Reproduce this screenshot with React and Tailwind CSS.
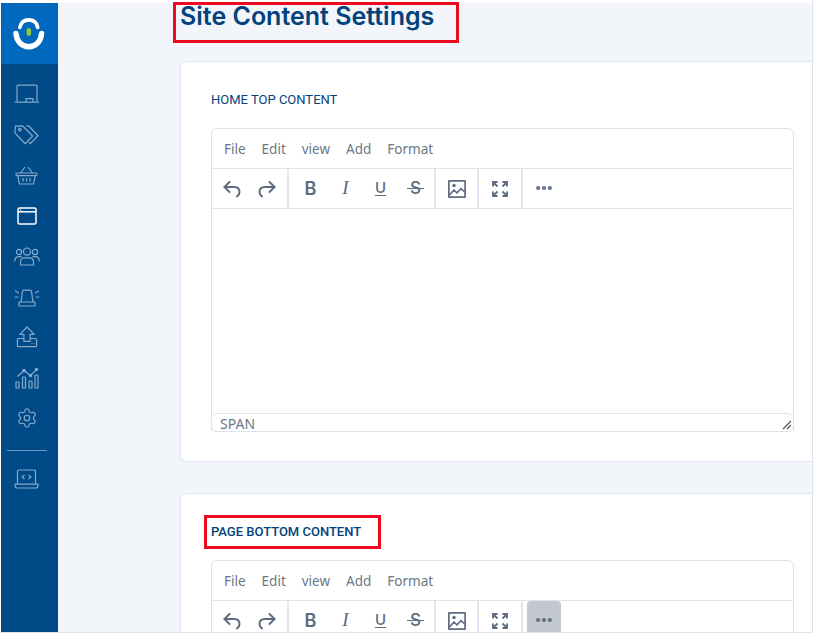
import { Ellipsis, Settings } from "lucide-react";

const navColor = "#86a8c9";

function BoardIcon() {
  return (
    <svg width="26" height="20" viewBox="0 0 26 20" fill="none" stroke="currentColor" strokeWidth="1.2">
      <path d="M3 17.500V2.200q0-1 1-1h18q1 0 1 1v15.300" />
      <path d="M.8 18.200h24.400" />
      <path d="M12 18v-3.400h7V18" />
    </svg>
  );
}

function TagsIcon() {
  return (
    <svg width="25" height="22" viewBox="0 0 26 23" fill="none" stroke="currentColor" strokeWidth="1.300" strokeLinejoin="round">
      <path d="M1.200 2.200 1 8.600q0 .8.600 1.400l10 10.600 7.800-8-10-10.200q-.6-.5-1.300-.5z" />
      <circle cx="6" cy="6" r="1.300" />
      <path d="M13 1.900h1.500q.7 0 1.200.5l9.300 9.900-8 8.200-1.800-1.800" />
    </svg>
  );
}

function BasketIcon() {
  return (
    <svg width="23" height="19" viewBox="0 0 23 19" fill="none" stroke="currentColor" strokeWidth="1.200" strokeLinejoin="round">
      <path d="M5.500 7 10 1M17.500 7 13 1" />
      <rect x="1" y="7" width="21" height="2.600" rx="1" />
      <path d="m2.800 9.600 1.600 8.400h14.200l1.600-8.400" />
      <path d="M8 12v3.500M11.500 12v3.500M15 12v3.500" />
    </svg>
  );
}

function WindowIcon() {
  return (
    <svg width="20" height="18" viewBox="0 0 20 18" fill="none" stroke="currentColor" strokeWidth="1.500">
      <rect x="1" y="1" width="18" height="16" rx="1.500" />
      <path d="M1 4.800h18" />
      <path d="M3.200 2.900h1" />
    </svg>
  );
}

function PeopleIcon() {
  return (
    <svg width="26" height="19" viewBox="0 0 26 19" fill="none" stroke="currentColor" strokeWidth="1.200" strokeLinecap="round">
      <circle cx="13" cy="4.600" r="3.600" />
      <circle cx="5" cy="5" r="2.600" />
      <circle cx="21" cy="5" r="2.600" />
      <path d="M6.500 18v-3q0-4.200 4-4.200h5q4 0 4 4.200v3z" />
      <path d="M.8 14q0-4.400 4-4.400h2.400M25.200 14q0-4.400-4-4.400h-2.400" />
    </svg>
  );
}

function SirenIcon() {
  return (
    <svg width="26" height="20" viewBox="0 0 26 20" fill="none" stroke="currentColor" strokeWidth="1.200" strokeLinecap="round">
      <path d="M7 15 8.500 4.500q.2-1.300 1.500-1.300h6q1.300 0 1.500 1.300L19 15" />
      <rect x="5" y="15" width="16" height="4" rx=".6" />
      <path d="M1.500 4 4.500 6M1 10h3M24.500 4 21.500 6M25 10h-3" />
    </svg>
  );
}

function UploadIcon() {
  return (
    <svg width="22" height="22" viewBox="0 0 22 22" fill="none" stroke="currentColor" strokeWidth="1.200" strokeLinejoin="round">
      <path d="M11 1 3.800 8.400h4.100v7h6.200v-7h4.100z" />
      <path d="M7.900 12.500H2.600q-1.200 0-1.200 1.200v6q0 1 1 1h17.200q1 0 1-1v-6q0-1.200-1.200-1.200h-5.300" />
      <path d="M15.500 17.500h1M18 17.500h.6" />
    </svg>
  );
}

function ChartIcon() {
  return (
    <svg width="24" height="22" viewBox="0 0 24 22" fill="none" stroke="currentColor" strokeWidth="1.200">
      <rect x="1" y="15" width="3" height="6" rx=".6" />
      <rect x="7.500" y="10" width="3" height="11" rx=".6" />
      <rect x="14" y="14" width="3" height="7" rx=".6" />
      <rect x="20" y="8" width="3" height="13" rx=".6" />
      <path d="m2.500 9.500 6.500-6 6.500 5 6-6" />
      <circle cx="9" cy="3.500" r="1.200" fill="currentColor" />
      <circle cx="15.500" cy="8.500" r="1.200" fill="currentColor" />
      <circle cx="21.500" cy="2.500" r="1.200" fill="currentColor" />
    </svg>
  );
}

function GearIcon() {
  return <Settings size={22} strokeWidth={1.300} />;
}

function LaptopCodeIcon() {
  return (
    <svg width="25" height="20" viewBox="0 0 25 20" fill="none" stroke="currentColor" strokeWidth="1.200" strokeLinejoin="round">
      <path d="M3.500 14.500V2.200q0-1.200 1.200-1.200h15.600q1.200 0 1.200 1.200v12.300" />
      <path d="M1 15.200h23v1.600q0 2.200-2.200 2.200H3.200Q1 19 1 16.800z" />
      <path d="M10.500 6 8 8l2.500 2M14.500 6 17 8l-2.500 2" />
    </svg>
  );
}

function Logo() {
  return (
    <svg width="32" height="32" viewBox="0 0 32 32" fill="none" strokeLinecap="round">
      <path d="M6.800 9.500C8 4 11.800 1.900 15.800 1.900s7.800 2.100 9 7.600" stroke="#fff" strokeWidth="3.600" />
      <path d="M3 15.500C3.600 23.500 9 28.700 15.800 28.700s12.200-5.200 12.800-13.200" stroke="#fff" strokeWidth="5.400" />
      <ellipse cx="15.800" cy="14" rx="2.400" ry="4" fill="#8dc63f" />
    </svg>
  );
}

function UndoIcon() {
  return (
    <svg width="18" height="18" viewBox="0 0 18 18" fill="none" stroke="currentColor" strokeWidth="2" strokeLinecap="round" strokeLinejoin="round">
      <path d="M6.500 2 1.500 7l5 5" />
      <path d="M1.500 7h9.500q5.500 0 5.500 5 0 2.500-2.500 4.500" />
    </svg>
  );
}

function RedoIcon() {
  return (
    <svg width="18" height="18" viewBox="0 0 18 18" fill="none" stroke="currentColor" strokeWidth="2" strokeLinecap="round" strokeLinejoin="round">
      <path d="m11.500 2 5 5-5 5" />
      <path d="M16.500 7H7q-5.500 0-5.500 5 0 2.500 2.500 4.500" />
    </svg>
  );
}

function PictureIcon() {
  return (
    <svg width="18" height="18" viewBox="0 0 18 18" fill="none" stroke="currentColor" strokeWidth="1.700" strokeLinejoin="round">
      <rect x=".9" y=".9" width="16.200" height="16.200" />
      <circle cx="6" cy="5.500" r="1.700" fill="currentColor" stroke="none" />
      <path d="m1 15.500 5-5.500 3 3 4-4.500 4.200 4" />
    </svg>
  );
}

function FullscreenIcon() {
  return (
    <svg width="16" height="16" viewBox="0 0 16 16" fill="none" stroke="currentColor" strokeWidth="1.800">
      <path d="M1 5.500V1h4.500M1 1l4.500 4.500M15 5.500V1h-4.500M15 1l-4.500 4.500M1 10.500V15h4.500M1 15l4.500-4.500M15 10.500V15h-4.500M15 15l-4.500-4.500" />
    </svg>
  );
}

function Tool({ children }) {
  return <span className="flex h-full w-[35px] items-center justify-center">{children}</span>;
}

function Editor({ moreActive, children }) {
  return (
    <div className="rounded-md border border-[#d9e3ee] bg-white">
      <div className="flex h-[39px] items-center gap-[16px] pt-[2px] pl-[12px] text-[13.500px] text-[#6b7785]">
        <span>File</span>
        <span>Edit</span>
        <span>view</span>
        <span>Add</span>
        <span>Format</span>
      </div>
      <div className="flex h-[41px] items-stretch border-y border-[#dfe5ec] text-[#5c6b80]">
        <div className="flex w-[77px] items-center border-r-2 border-[#e3e6ea] px-[3px]">
          <Tool><UndoIcon /></Tool>
          <Tool><RedoIcon /></Tool>
        </div>
        <div className="flex w-[147px] items-center border-r-2 border-[#e3e6ea] pl-[4px]">
          <Tool><span className="font-['Inter',sans-serif] text-[18px] font-semibold">B</span></Tool>
          <Tool><span className="font-['Liberation_Serif',serif] text-[19px] italic">I</span></Tool>
          <Tool><span className="font-['Inter',sans-serif] text-[15px] font-medium underline underline-offset-2">U</span></Tool>
          <Tool>
            <span className="relative font-['Inter',sans-serif] text-[17px] font-medium">
              S
              <span className="absolute top-[12px] left-[-3px] h-[1.500px] w-[17px] bg-[#5c6b80]" />
            </span>
          </Tool>
        </div>
        <div className="flex w-[43px] items-center justify-center border-r-2 border-[#e3e6ea]"><PictureIcon /></div>
        <div className="flex w-[44px] items-center justify-center border-r-2 border-[#e3e6ea]"><FullscreenIcon /></div>
        <div className="flex items-start pl-[4px]">
          <span className={`flex h-[38px] w-[34px] items-center justify-center rounded-t-sm ${moreActive ? "bg-[#c3c7cf]" : ""}`}>
            <Ellipsis size={20} strokeWidth={3} />
          </span>
        </div>
      </div>
      {children}
    </div>
  );
}

export default function App() {
  const nav = [
    [BoardIcon, false],
    [TagsIcon, false],
    [BasketIcon, false],
    [WindowIcon, true],
    [PeopleIcon, false],
    [SirenIcon, false],
    [UploadIcon, false],
    [ChartIcon, false],
    [GearIcon, false],
  ];

  return (
    <div className="h-[633px] w-[813px] overflow-hidden border-r border-b border-[#dfe3e8] bg-white pt-[3px] font-['Noto_Sans',sans-serif]">
      <div className="flex h-full">
        <div className="ml-px flex h-full w-[57px] shrink-0 flex-col bg-[#004b87]">
          <div className="flex h-[61px] items-center justify-center bg-[#0068bd] pt-[1px] pr-[2px]">
            <Logo />
          </div>
          <div className="flex flex-col items-center pt-[10px] pr-[6px]">
            {nav.map(([Icon, active], i) => (
              <div key={i} className="flex h-[40.500px] w-full items-center justify-center" style={{ color: active ? "#ffffff" : navColor }}>
                <Icon />
              </div>
            ))}
            <div className="mt-[11px] mb-[8px] h-px w-[40px] bg-[#6d93b8]" />
            <div className="flex h-[40px] items-center justify-center" style={{ color: navColor }}>
              <LaptopCodeIcon />
            </div>
          </div>
        </div>

        <div className="relative min-w-0 flex-1 bg-[#f2f6fa] pl-[122px]">
          <h1 className="font-['Inter',sans-serif] text-[25px] leading-[27px] font-semibold text-[#03427c]">
            Site Content Settings
          </h1>
          <div className="mt-[31px] h-[401px] rounded-l-md border border-r-0 border-[#e1e8f0] bg-white pt-[30px] pr-[18px] pl-[30px]">
            <h2 className="font-['Roboto',sans-serif] text-[13px] leading-[16px] text-[#03427c]">HOME TOP CONTENT</h2>
            <div className="mt-[20px]">
              <Editor>
                <div className="h-[204px]" />
                <div className="relative -mx-px h-[18px] rounded-t-md border-x border-t border-[#dfe5ec] pl-[8px] text-[14px] leading-[19px] text-[#6b7785]">
                  SPAN
                  <svg className="absolute right-[1px] bottom-[1px]" width="10" height="10" viewBox="0 0 10 10" stroke="#555" strokeWidth="1.200">
                    <path d="M1 9 9 1M5 9l4-4" />
                  </svg>
                </div>
              </Editor>
            </div>
          </div>
          <div className="mt-[31px] h-[200px] rounded-tl-md border border-r-0 border-[#e1e8f0] bg-white pt-[30px] pr-[18px] pl-[30px]">
            <h2 className="font-['Roboto',sans-serif] text-[13px] leading-[16px] font-medium text-[#03427c]">PAGE BOTTOM CONTENT</h2>
            <div className="mt-[20px]">
              <Editor moreActive />
            </div>
          </div>
          <div className="absolute top-[-1px] left-[115px] h-[41px] w-[286px] border-[3px] border-[#ee0a1e]" />
          <div className="absolute top-[512px] left-[146px] h-[34px] w-[177px] border-[3px] border-[#ee0a1e]" />
        </div>
      </div>
    </div>
  );
}
